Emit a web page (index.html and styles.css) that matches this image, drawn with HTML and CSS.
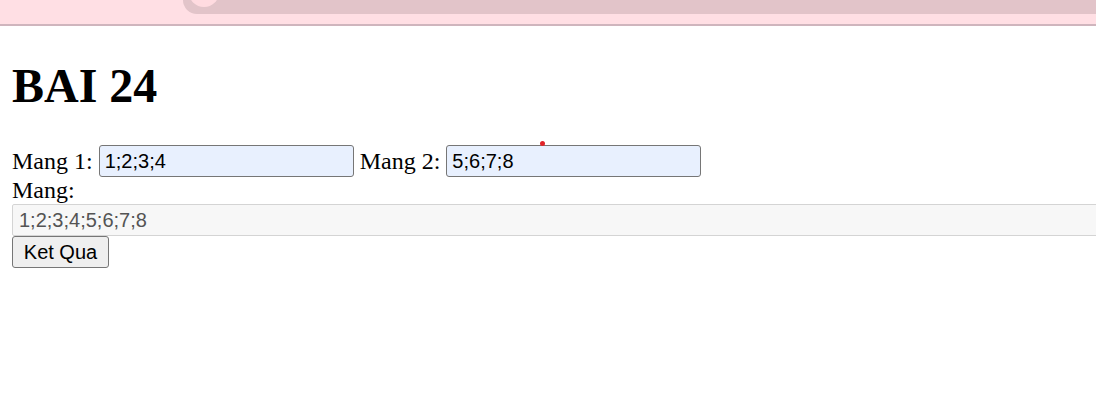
FILE: index.html
```html
<!DOCTYPE html>
<html>
<head>
<meta charset="utf-8">
<title>BAI 24</title>
<link rel="stylesheet" href="styles.css">
</head>
<body>
<div class="chrome">
  <div class="chrome-tab"><span class="chrome-knob"></span></div>
</div>
<div class="page">
  <h1 class="title">BAI 24</h1>
  <div class="row">Mang 1: <input class="field" type="text" value="1;2;3;4"> Mang 2: <input class="field" type="text" value="5;6;7;8"></div>
  <div class="row-label">Mang:</div>
  <input class="result" type="text" value="1;2;3;4;5;6;7;8" disabled>
  <button class="btn" type="button">Ket Qua</button>
  <span class="dot"></span>
</div>
</body>
</html>
```

FILE: styles.css
```css
html, body {
  margin: 0;
  padding: 0;
  background: #ffffff;
}

body {
  width: 1096px;
  height: 400px;
  overflow: hidden;
  font-family: "Liberation Serif", "Times New Roman", serif;
  font-size: 24px;
  color: #000;
}

.chrome {
  height: 24px;
  background: #ffdfe4;
  border-bottom: 2px solid #cfb5bd;
  padding-left: 183px;
  overflow: hidden;
}

.chrome-tab {
  position: relative;
  height: 14px;
  background: #e2c4c9;
  border-bottom-left-radius: 22px;
  overflow: hidden;
}

.chrome-knob {
  position: absolute;
  left: 6px;
  top: -22px;
  width: 30px;
  height: 29px;
  border-radius: 50%;
  background: #ffdbe0;
}

.page {
  position: relative;
  padding: 0 12px;
  overflow: hidden;
  height: 374px;
}

.title {
  font-size: 48px;
  line-height: 55px;
  font-weight: bold;
  margin: 32px 0;
}

.row {
  display: flex;
  align-items: center;
  height: 32px;
  white-space: pre;
}

.row-label {
  line-height: 27px;
}

.field {
  box-sizing: border-box;
  width: 255px;
  height: 32px;
  margin: 0;
  padding: 0 5px;
  border: 1px solid #767676;
  border-radius: 3px;
  background: #e8f0fe;
  font-family: "Liberation Sans", Arial, sans-serif;
  font-size: 20px;
  color: #000;
}

.result {
  display: block;
  box-sizing: border-box;
  width: calc(100% + 40px);
  height: 32px;
  margin: 0;
  padding: 0 6px;
  border: 1px solid #d4d4d4;
  border-radius: 2px;
  background: #f7f7f7;
  font-family: "Liberation Sans", Arial, sans-serif;
  font-size: 20px;
  color: #545454;
}

.btn {
  display: block;
  box-sizing: border-box;
  width: 97px;
  height: 32px;
  margin: 0;
  padding: 0 9px;
  border: 1px solid #767676;
  border-radius: 3px;
  background: #efefef;
  font-family: "Liberation Sans", Arial, sans-serif;
  font-size: 20px;
  color: #000;
}

.dot {
  position: absolute;
  left: 540px;
  top: 115px;
  width: 5px;
  height: 5px;
  border-radius: 50%;
  background: #e0242a;
}
```
